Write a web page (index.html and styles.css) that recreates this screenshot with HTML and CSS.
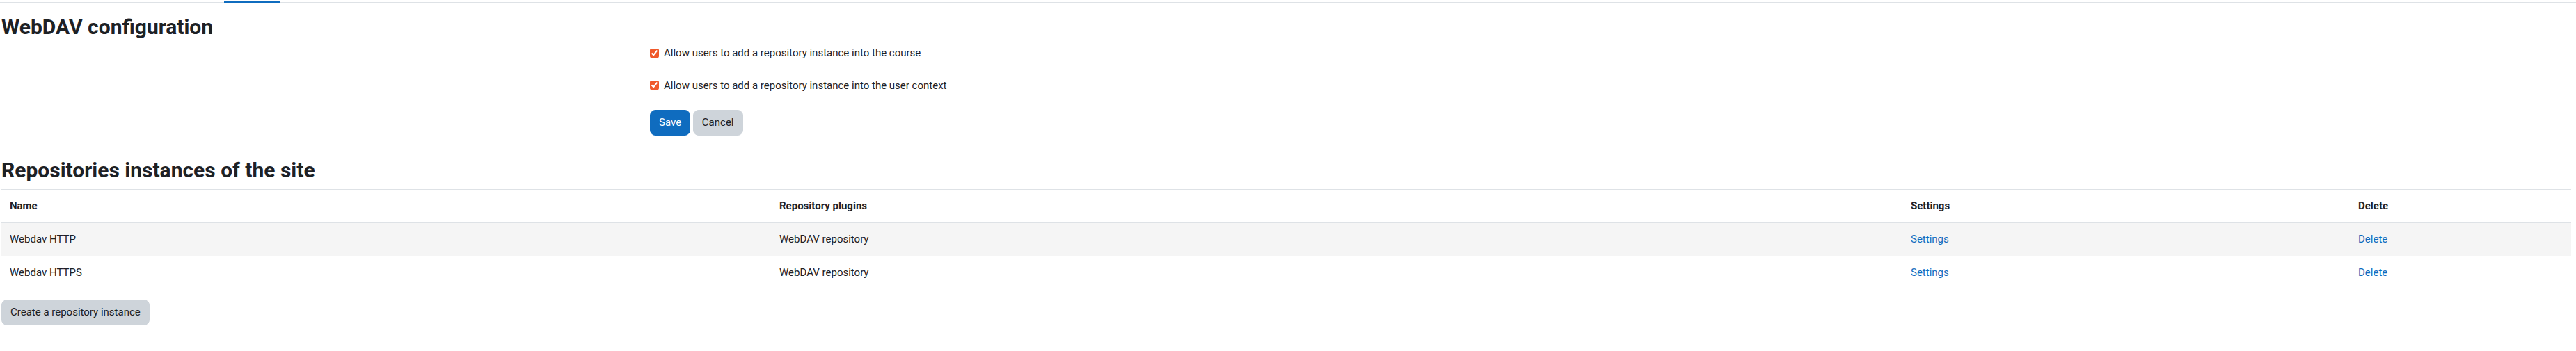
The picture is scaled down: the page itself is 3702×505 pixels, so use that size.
FILE: index.html
```html
<!DOCTYPE html>
<html lang="en">
<head>
  <meta charset="UTF-8" />
  <title>WebDAV configuration</title>
  <link rel="stylesheet" href="styles.css">
</head>
<body>
  <!-- tab strip, scrolled mostly out of view -->
  <div class="tabs">
    <span class="tab-active"></span>
  </div>

  <div class="page">
    <h2>WebDAV configuration</h2>

    <form class="mform" onsubmit="return false;">
      <div class="fitem">
        <div class="flabel"></div>
        <label class="fcheck">
          <input type="checkbox" checked>
          <span>Allow users to add a repository instance into the course</span>
        </label>
      </div>
      <div class="fitem">
        <div class="flabel"></div>
        <label class="fcheck">
          <input type="checkbox" checked>
          <span>Allow users to add a repository instance into the user context</span>
        </label>
      </div>
      <div class="fitem fbuttons">
        <div class="flabel"></div>
        <div>
          <button class="btn btn-primary">Save</button>
          <button class="btn btn-secondary">Cancel</button>
        </div>
      </div>
    </form>

    <h2 class="second">Repositories instances of the site</h2>

    <table class="generaltable">
      <colgroup>
        <col class="c-name">
        <col class="c-plugin">
        <col class="c-settings">
        <col class="c-delete">
      </colgroup>
      <thead>
        <tr>
          <th>Name</th>
          <th>Repository plugins</th>
          <th>Settings</th>
          <th>Delete</th>
        </tr>
      </thead>
      <tbody>
        <tr>
          <td>Webdav HTTP</td>
          <td>WebDAV repository</td>
          <td><a href="#">Settings</a></td>
          <td><a href="#">Delete</a></td>
        </tr>
        <tr>
          <td>Webdav HTTPS</td>
          <td>WebDAV repository</td>
          <td><a href="#">Settings</a></td>
          <td><a href="#">Delete</a></td>
        </tr>
      </tbody>
    </table>

    <button class="btn btn-secondary">Create a repository instance</button>
  </div>
</body>
</html>
```

FILE: styles.css
```css
/* BASE */
* {
  box-sizing: border-box;
}
body {
  margin: 0;
  font-family: Roboto, "Liberation Sans", sans-serif;
  font-size: 15px;
  line-height: 1.5;
  color: #1d2125;
  background: #fff;
}
a {
  color: #0f6cbf;
  text-decoration: none;
}

/* TABS */
.tabs {
  display: flex;
  align-items: flex-end;
  height: 4px;
  padding-left: 322px;
  border-bottom: 1px solid #dee2e6;
}
.tab-active {
  display: block;
  width: 81px;
  height: 3px;
  margin-bottom: -1px;
  background: #0f6cbf;
}

/* PAGE */
.page {
  padding: 0 7px 0 2px;
}
h2 {
  font-size: 30px;
  font-weight: 700;
  line-height: 1.2;
  margin: 17px 0 8px;
}
h2.second {
  margin-top: 32px;
  margin-bottom: 9px;
}

/* FORM */
.fitem {
  display: grid;
  grid-template-columns: 932px 1fr;
  margin-bottom: 24px;
}
.fbuttons {
  margin-bottom: 0;
}
.fcheck {
  display: flex;
  align-items: center;
}
.fcheck input {
  width: 13px;
  height: 13px;
  margin: 0 7px 0 0;
  accent-color: #f0592a;
}

/* BUTTONS */
.btn {
  font-family: inherit;
  font-size: 15px;
  line-height: 1.5;
  padding: 6px 12px;
  border: 1px solid transparent;
  border-radius: 8px;
  cursor: pointer;
}
.btn-primary {
  background: #0f6cbf;
  border-color: #0f6cbf;
  color: #fff;
}
.btn-secondary {
  background: #ced4da;
  border-color: #ced4da;
  color: #1d2125;
}

/* TABLE */
.generaltable {
  width: 100%;
  border-collapse: collapse;
  margin-bottom: 16px;
}
.c-name { width: 1106px; }
.c-plugin { width: 1626px; }
.c-settings { width: 643px; }
.generaltable th,
.generaltable td {
  text-align: left;
  vertical-align: top;
  padding: 12px;
  border-top: 1px solid #dee2e6;
}
.generaltable th {
  font-weight: 700;
  border-bottom: 2px solid #dee2e6;
}
.generaltable tbody tr:nth-child(odd) {
  background: #f5f5f5;
}
```
